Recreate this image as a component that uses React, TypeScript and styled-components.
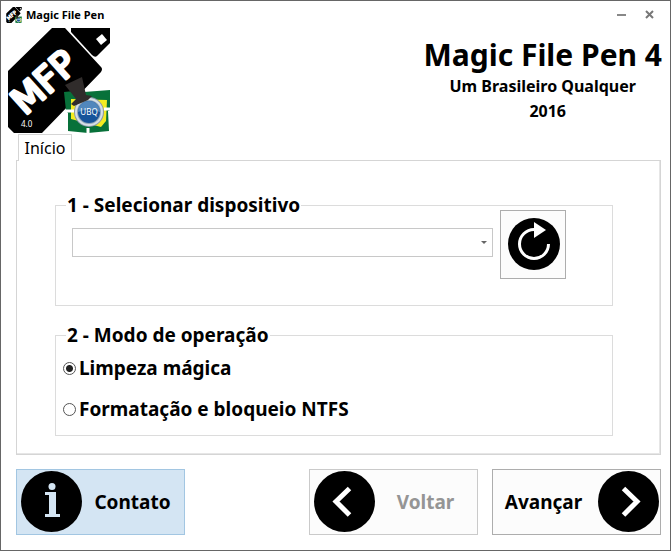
import React, { useState } from "react";
import styled, { createGlobalStyle } from "styled-components";

const GlobalStyle = createGlobalStyle`
  *, *::before, *::after { box-sizing: border-box; }
  body {
    margin: 0;
    background: #fff;
    color: #000;
    font-family: "Noto Sans", "Open Sans", sans-serif;
  }
  button, select, input { font: inherit; color: inherit; margin: 0; }
`;

const Window = styled.div`
  display: flex;
  flex-direction: column;
  min-height: 100vh;
  border: 1px solid #666;
  background: #fff;
`;

const TitleBar = styled.header`
  display: flex;
  align-items: center;
  height: 27px;
  padding: 0 7px 0 5px;
`;

const WindowTitle = styled.span`
  flex: 1;
  margin-left: 4px;
  font-size: 11px;
  font-weight: 700;
  line-height: 16px;
`;

const WindowButton = styled.button`
  display: grid;
  place-items: center;
  width: 28px;
  height: 24px;
  padding: 0;
  border: 0;
  background: none;
`;

const Banner = styled.div`
  display: flex;
  justify-content: space-between;
  align-items: flex-start;
  height: 106px;
  padding: 0 8px 0 7px;
`;

const Heading = styled.div`
  display: flex;
  flex-direction: column;
  align-items: center;
  padding-top: 8px;
`;

const ProductName = styled.h1`
  margin: 0;
  font-size: 30px;
  font-weight: 700;
  line-height: 38px;
`;

const Credit = styled.p<{ $indent?: number }>`
  margin: 0;
  padding-left: ${(p) => p.$indent ?? 0}px;
  font-size: 16px;
  font-weight: 700;
  line-height: 25px;
`;

const TabList = styled.div`
  display: flex;
  padding-left: 17px;
`;

const Tab = styled.button`
  position: relative;
  height: 27px;
  width: 54px;
  margin-bottom: -1px;
  padding: 0;
  border: 1px solid #d5d5d5;
  border-bottom: 0;
  background: #fff;
  font-size: 16px;
  line-height: 24px;
`;

const TabPanel = styled.main`
  display: flex;
  flex-direction: column;
  gap: 24px;
  flex: 1;
  margin: 0 9px 0 15px;
  padding: 39px 47px 18px 38px;
  border: 1px solid #d5d5d5;
  box-shadow: inset -1px -1px #e6e6e6;
`;

const Group = styled.fieldset<{ $inset: number }>`
  min-width: 0;
  height: 106px;
  margin: 0;
  padding: 0 46px 0 ${(p) => p.$inset}px;
  border: 1px solid #dcdcdc;
`;

const GroupTitle = styled.legend<{ $indent: number }>`
  margin-left: ${(p) => p.$indent}px;
  padding: 0 1px;
  font-size: 19px;
  font-weight: 700;
  line-height: 10px;
`;

const DeviceRow = styled.div`
  display: flex;
  gap: 7px;
`;

const DeviceBox = styled.div`
  display: grid;
  flex: 1;
  height: 29px;
  margin-top: 18px;
`;

const DeviceSelect = styled.select`
  grid-area: 1 / 1;
  width: 100%;
  padding: 0 24px 0 8px;
  border: 1px solid #c8c8c8;
  border-radius: 0;
  background: #fff;
  appearance: none;
  font-size: 16px;
`;

const DeviceArrow = styled.svg`
  grid-area: 1 / 1;
  place-self: center end;
  margin-right: 6px;
  pointer-events: none;
`;

const RefreshButton = styled.button`
  display: grid;
  place-items: center;
  width: 66px;
  height: 69px;
  padding: 0 0 2px 2px;
  border: 1px solid #adadad;
  background: #fcfcfc;
`;

const Options = styled.div`
  display: flex;
  flex-direction: column;
  gap: 17px;
  padding-top: 16px;
`;

const Option = styled.label`
  display: flex;
  align-items: center;
  gap: 3px;
  font-size: 19px;
  font-weight: 700;
  line-height: 24px;
`;

const Radio = styled.input`
  width: 13px;
  height: 13px;
  border: 1px solid #555;
  border-radius: 50%;
  background: #fff;
  appearance: none;

  &:checked {
    background: radial-gradient(circle, #222 3px, #fff 4px);
  }
`;

const Footer = styled.footer`
  display: flex;
  gap: 14px;
  padding: 14px 9px 15px 15px;
`;

const ActionButton = styled.button<{ $tone: "info" | "plain" }>`
  display: flex;
  align-items: center;
  width: 169px;
  height: 66px;
  padding: 0 1px 2px 4px;
  border: 1px solid ${(p) => (p.$tone === "info" ? "#a2c6e2" : "#adadad")};
  background: ${(p) => (p.$tone === "info" ? "#d4e5f3" : "#fcfcfc")};
  font-size: 19px;
  font-weight: 700;
  line-height: 24px;

  &:first-child { margin-right: auto; }
  &:disabled { border-color: #cacaca; color: #959595; }
`;

const ActionLabel = styled.span<{ $trailing?: number }>`
  flex: 1;
  padding: 2px ${(p) => p.$trailing ?? 0}px 0 0;
`;

const LogoImage = styled.svg`
  overflow: visible;
`;

function Logo({ width, height }: { width: number; height: number }) {
  return (
    <LogoImage width={width} height={height} viewBox="0 0 102 105" aria-hidden="true">
      <path d="M0 43 44 0H57L93 39Q95 41 93 44L34 105H6L0 99Z" />
      <path d="M63 0H102V15L89 28Q87 30 84 27L63 4Z" />
      <path d="M94 6 99 12 93 17 88 11Z" fill="#fff" />
      <text
        transform="translate(17 88) rotate(-42)"
        fontFamily="DejaVu Sans"
        fontSize="36"
        fill="#fff"
        stroke="#fff"
        strokeWidth="3"
        strokeLinejoin="round"
      >
        MFP
      </text>
      <text x="13" y="99" fontFamily="Noto Sans" fontSize="8" fill="#fff">4.0</text>
      <path d="M56 64 66 63 76 64 102 62V82L100 83 101 103 80 105 60 103V85L58 83Z" fill="#08713a" />
      <path d="M63 71 99 72 98 93 93 99 63 91Z" fill="#f4ec21" />
      <path d="M58 83H66M80 100V105M96 81H102" stroke="#fff" strokeWidth="3" />
      <circle cx="81" cy="84" r="15" fill="#8998a6" />
      <circle cx="81" cy="84" r="14" fill="#d6dfe6" />
      <circle cx="81" cy="84" r="12" fill="#8fa5b8" />
      <circle cx="81" cy="84" r="11" fill="#17549a" />
      <path d="M70 84A11 11 0 0 1 92 84Q81 79 70 84Z" fill="#5187bc" />
      <text x="81" y="87" textAnchor="middle" fontFamily="Noto Sans" fontSize="8" fill="#fff">UBQ</text>
      <path d="M57 57 74 49 78 67 84 68 80 72 66 78 63 76 68 71Z" fill="#302c2b" />
    </LogoImage>
  );
}

function RefreshIcon() {
  return (
    <svg width="52" height="52" viewBox="0 0 52 52" aria-hidden="true">
      <circle cx="26" cy="26" r="26" />
      <path d="M26 11.5A14.5 14.5 0 1 0 40.5 26" fill="none" stroke="#fff" strokeWidth="3" />
      <path d="M26 4V20L38 12Z" fill="#fff" />
    </svg>
  );
}

function ChevronIcon({ direction }: { direction: "left" | "right" }) {
  return (
    <svg width="61" height="61" viewBox="0 0 61 61" aria-hidden="true">
      <circle cx="30.5" cy="30.5" r="30.5" />
      <path
        d={direction === "left" ? "M35.5 17.5 22 30.5 35.5 44" : "M25.5 17.5 39 30.5 25.5 44"}
        fill="none"
        stroke="#fff"
        strokeWidth="5"
      />
    </svg>
  );
}

function InfoIcon() {
  return (
    <svg width="61" height="61" viewBox="0 0 61 61" aria-hidden="true">
      <circle cx="30.5" cy="30.5" r="30.5" />
      <circle cx="31" cy="15.5" r="3.5" fill="#d4e5f3" />
      <path d="M24 21H35V43H39V46H24V43H28V24H24Z" fill="#d4e5f3" />
    </svg>
  );
}

export default function App() {
  const [mode, setMode] = useState("clean");
  return (
    <>
      <GlobalStyle />
      <Window>
        <TitleBar>
          <Logo width={16} height={16} />
          <WindowTitle>Magic File Pen</WindowTitle>
          <WindowButton aria-label="Minimizar">
            <svg width="9" height="9" aria-hidden="true"><path d="M0 4h9v2H0z" fill="#888" /></svg>
          </WindowButton>
          <WindowButton aria-label="Fechar">
            <svg width="9" height="9" aria-hidden="true"><path d="m1 1 7 7M8 1 1 8" stroke="#777" strokeWidth="2" /></svg>
          </WindowButton>
        </TitleBar>
        <Banner>
          <Logo width={102} height={105} />
          <Heading>
            <ProductName>Magic File Pen 4</ProductName>
            <Credit>Um Brasileiro Qualquer</Credit>
            <Credit $indent={10}>2016</Credit>
          </Heading>
        </Banner>
        <TabList role="tablist">
          <Tab role="tab" aria-selected="true">Início</Tab>
        </TabList>
        <TabPanel role="tabpanel">
          <Group $inset={16}>
            <GroupTitle $indent={-6}>1 - Selecionar dispositivo</GroupTitle>
            <DeviceRow>
              <DeviceBox>
                <DeviceSelect aria-label="Selecionar dispositivo" />
                <DeviceArrow width="6" height="3" aria-hidden="true"><path d="M0 0h6L3 3z" fill="#666" /></DeviceArrow>
              </DeviceBox>
              <RefreshButton aria-label="Atualizar"><RefreshIcon /></RefreshButton>
            </DeviceRow>
          </Group>
          <Group $inset={7}>
            <GroupTitle $indent={3}>2 - Modo de operação</GroupTitle>
            <Options>
              <Option>
                <Radio type="radio" name="mode" checked={mode === "clean"} onChange={() => setMode("clean")} />
                Limpeza mágica
              </Option>
              <Option>
                <Radio type="radio" name="mode" checked={mode === "format"} onChange={() => setMode("format")} />
                Formatação e bloqueio NTFS
              </Option>
            </Options>
          </Group>
        </TabPanel>
        <Footer>
          <ActionButton $tone="info"><InfoIcon /><ActionLabel>Contato</ActionLabel></ActionButton>
          <ActionButton $tone="plain" disabled><ChevronIcon direction="left" /><ActionLabel>Voltar</ActionLabel></ActionButton>
          <ActionButton $tone="plain"><ActionLabel $trailing={8}>Avançar</ActionLabel><ChevronIcon direction="right" /></ActionButton>
        </Footer>
      </Window>
    </>
  );
}
